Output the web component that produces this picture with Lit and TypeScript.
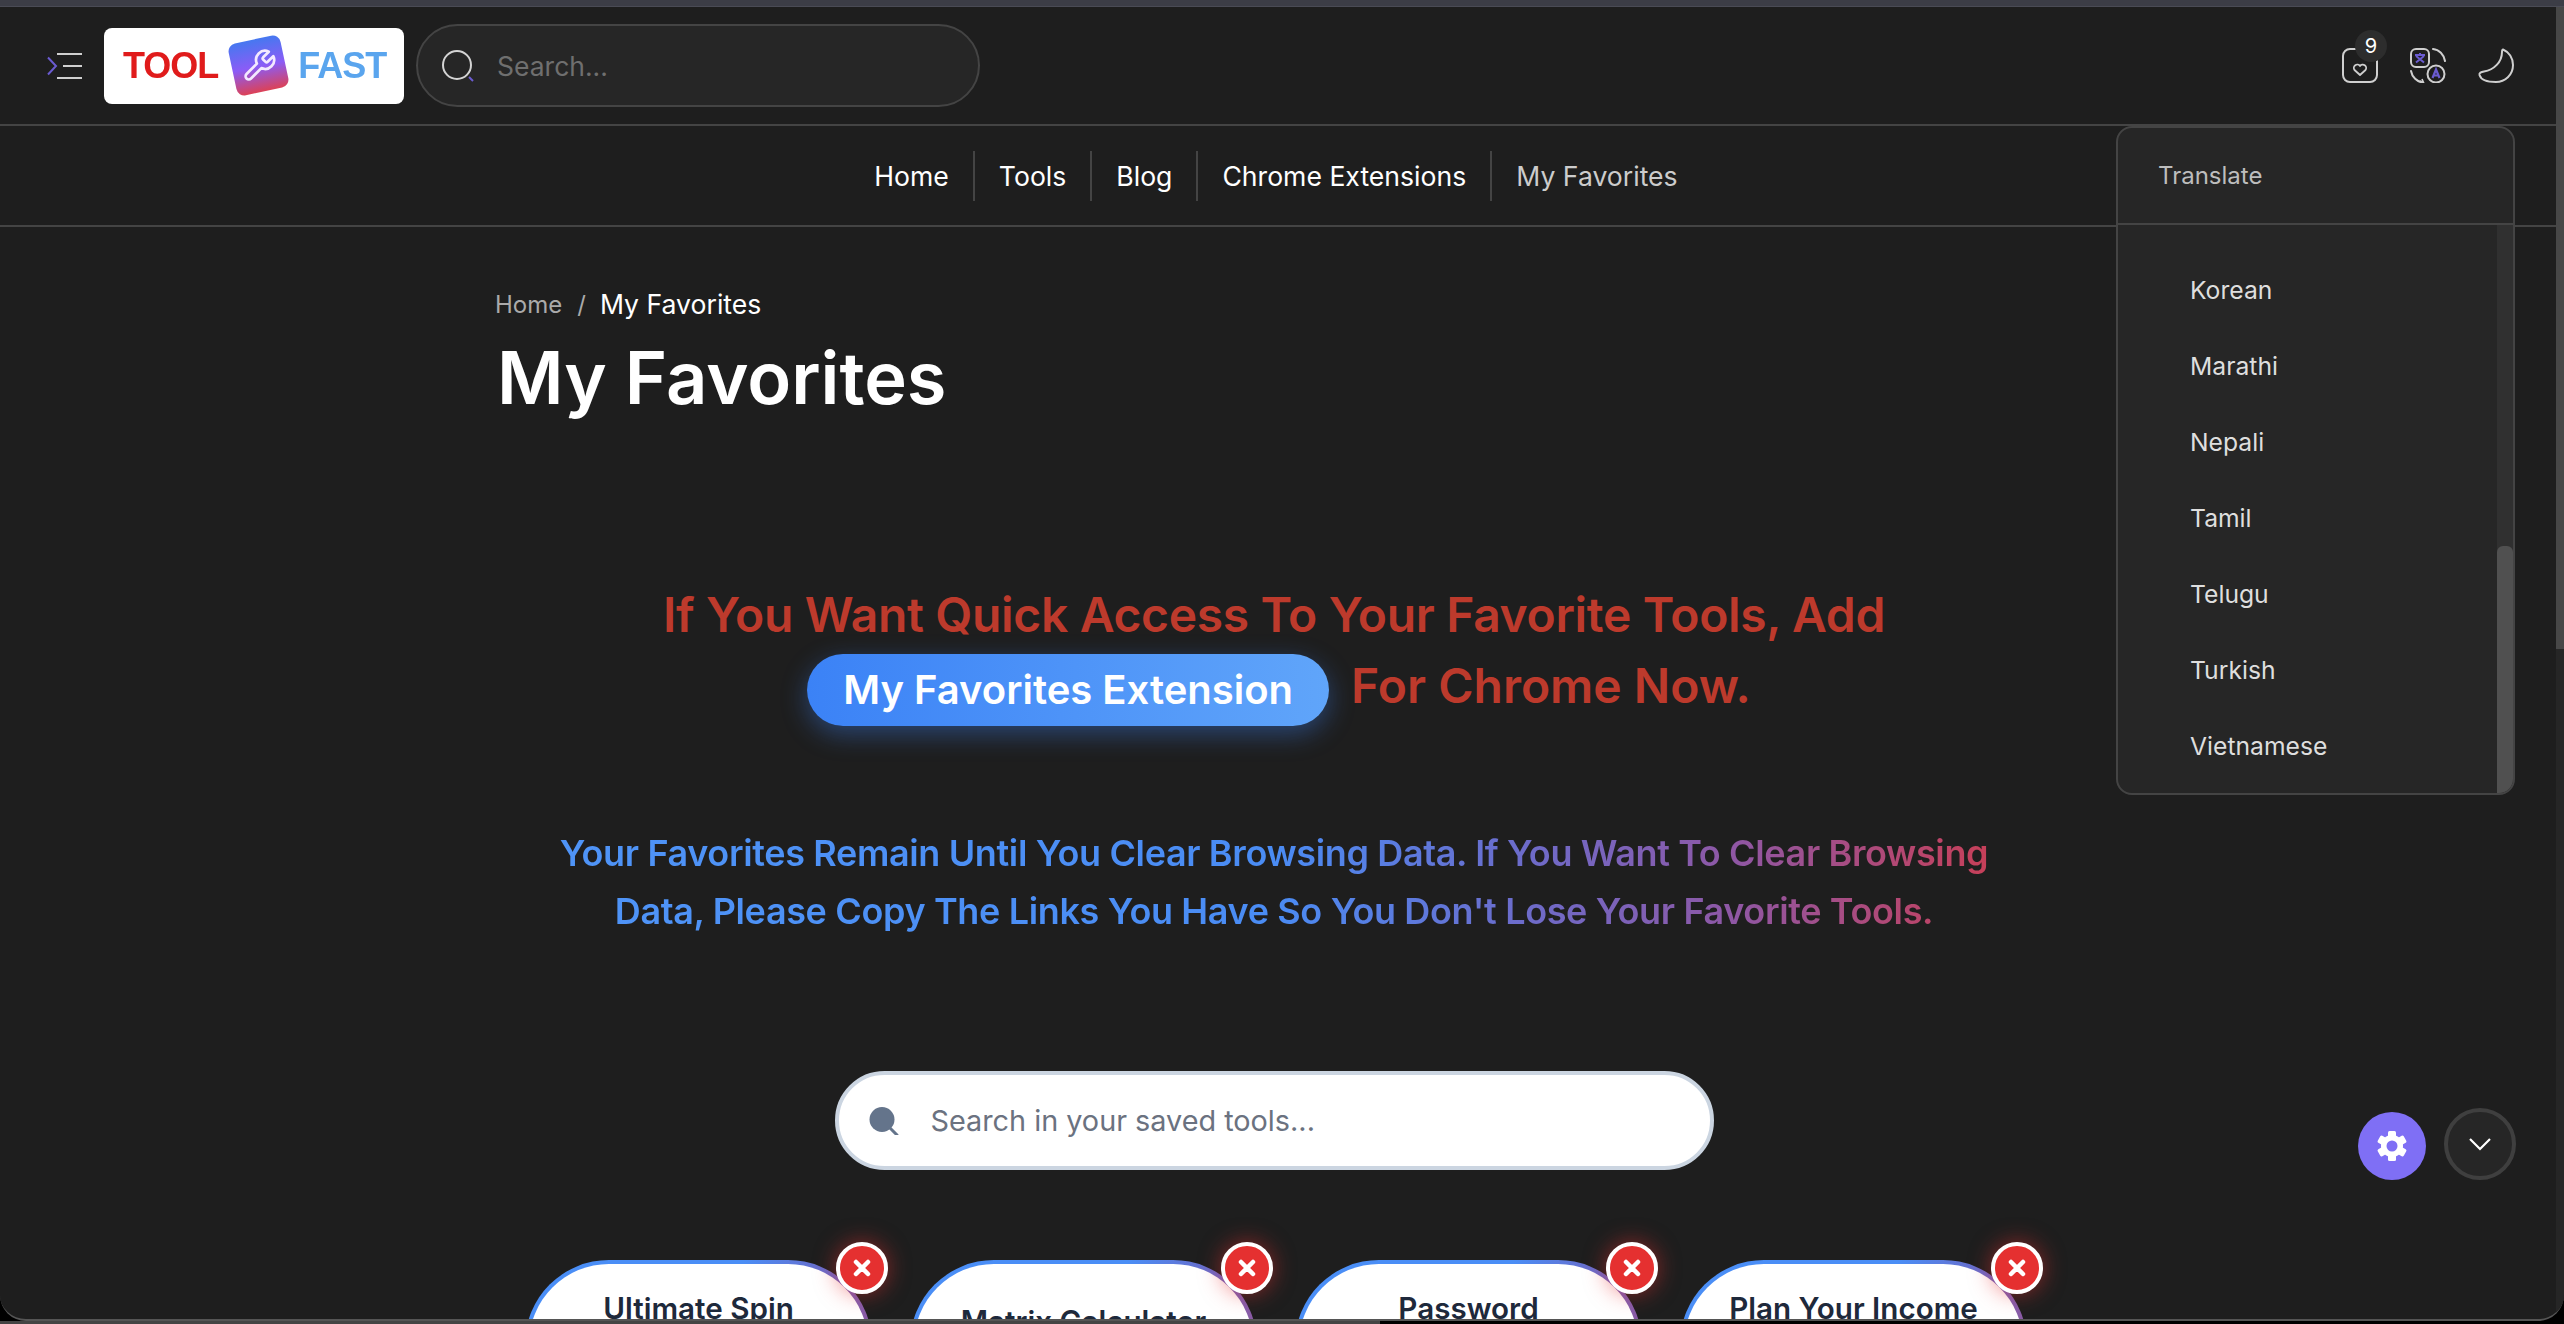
import { LitElement, html, css, svg } from "lit";
import { customElement } from "lit/decorators.js";

const LANGS = ["Korean", "Marathi", "Nepali", "Tamil", "Telugu", "Turkish", "Vietnamese"];
const CARDS = [
  { t: "Ultimate Spin", low: false },
  { t: "Matrix Calculator", low: true },
  { t: "Password", low: false },
  { t: "Plan Your Income", low: false },
];
const NAV = ["Home", "Tools", "Blog", "Chrome Extensions", "My Favorites"];

const gearTeeth = [0, 60, 120, 180, 240, 300].map(
  (a) => svg`<rect x="11" y="0" width="8" height="7" rx="1.5" fill="#fff" transform="rotate(${a} 15 15)"/>`
);

@customElement("app-root")
export class AppRoot extends LitElement {
  static styles = css`
    :host { display: block; width: 100%; height: 100vh; background: #000; overflow: hidden; font-family: Inter, "Noto Sans", sans-serif; }
    * { box-sizing: border-box; }
    .window { height: 1321px; background: #1e1e1e; border-bottom: 2px solid #555; border-radius: 0 0 26px 26px; overflow: hidden; display: flex; flex-direction: column; }
    .strip { height: 7px; flex: none; background: #3c3d46; border-bottom: 1px solid #4a4b55; }
    .body { flex: 1; display: flex; min-height: 0; }
    .main { flex: 1; min-width: 0; position: relative; overflow: hidden; }
    .pagebar { width: 8px; flex: none; background: #262626; }
    .pagebar i { display: block; height: 642px; background: #474747; }

    header { height: 119px; border-bottom: 2px solid #444; display: flex; align-items: center; padding: 0 42px 0 46px; }
    .ham { width: 36px; height: 26px; flex: none; margin-right: 22px; }
    .logo { width: 300px; height: 76px; flex: none; background: #fff; border-radius: 8px; display: flex; align-items: center; padding-left: 19px; margin-right: 12px; }
    .logo b { font: 700 36px "Liberation Sans", Arial, sans-serif; letter-spacing: -1px; line-height: 1; filter: blur(.4px); }
    .tool { color: #e01b1b; }
    .fast { color: #5aa5ee; }
    .tile { width: 53px; height: 53px; border-radius: 8px; margin: 0 13px 0 14px; transform: rotate(-12deg); background: linear-gradient(180deg, #4678f0 0%, #8b5cf6 52%, #dc4156 100%); display: flex; align-items: center; justify-content: center; flex: none; }
    .tile svg { width: 36px; height: 36px; transform: rotate(12deg); }
    .search { width: 564px; height: 83px; flex: none; background: #262626; border: 2px solid #444; border-radius: 42px; display: flex; align-items: center; padding-left: 24px; }
    .search svg { width: 32px; height: 32px; flex: none; margin-right: 23px; }
    .search span { color: #6f6f6f; font-size: 26.5px; }
    .right { margin-left: auto; display: flex; gap: 32px; align-items: center; }
    .ic { width: 36px; height: 35px; display: block; }
    .fav { position: relative; }
    .badge { position: absolute; left: 13px; top: -18px; width: 32px; height: 32px; border-radius: 50%; background: #2d2d2d; color: #fff; font-size: 20px; display: flex; align-items: center; justify-content: center; }

    nav { height: 101px; border-bottom: 2px solid #444; display: flex; align-items: center; justify-content: center; padding-right: 4px; }
    nav a { color: #fff; font-size: 26.6px; line-height: 50px; padding: 0 24px; border-left: 2px solid #444; }
    nav a:first-child { border-left: 0; }
    nav a:last-child { color: #ccc; }

    .menu { position: absolute; top: 119px; right: 41px; width: 399px; height: 669px; background: #262626; border: 2px solid #444; border-radius: 16px; overflow: hidden; display: flex; flex-direction: column; }
    .menu h4 { margin: 0; height: 97px; flex: none; border-bottom: 2px solid #444; color: #bdbdbd; font-weight: 400; font-size: 24px; display: flex; align-items: center; padding-left: 40px; }
    .menubody { flex: 1; display: flex; min-height: 0; }
    .langs { flex: 1; padding: 27px 0 0 72px; }
    .langs div { height: 76px; line-height: 76px; color: #dedede; font-size: 24.7px; }
    .mbar { width: 16px; background: #303030; display: flex; flex-direction: column; justify-content: flex-end; }
    .mbar i { display: block; height: 247px; background: #505050; border-radius: 6px 6px 0 0; }

    .content { margin-left: 495px; width: 1558px; padding-top: 57px; }
    .crumb { display: flex; align-items: center; height: 40px; font-size: 26.6px; color: #fff; }
    .crumb span { color: #aaa; font-size: 24px; }
    .crumb em { font-style: normal; color: #aaa; font-size: 24px; margin: 0 14px 0 15px; }
    h1 { margin: 9px 0 0 2px; font-size: 72.2px; line-height: 90px; font-weight: 600; color: #fff; }
    .promo { margin-top: 156px; text-align: center; color: #bd3a2c; font-size: 48px; font-weight: 600; line-height: 72px; }
    .promo1 { letter-spacing: -.35px; height: 75px; }
    .promo2 { display: flex; justify-content: center; align-items: center; gap: 22px; height: 72px; padding-left: 10px; }
    .promo2 span { margin-bottom: 8px; }
    .cta { height: 72px; padding: 0 36px; border-radius: 36px; display: flex; align-items: center; color: #fff; font-size: 40px; font-weight: 600; background: linear-gradient(90deg, #3b82f6, #60a5fa); box-shadow: 0 8px 26px rgba(59, 130, 246, .4); }
    .note { margin: 98px auto 0; width: 1440px; text-align: center; font-size: 36px; letter-spacing: -.36px; line-height: 58px; font-weight: 600; white-space: nowrap; color: transparent; background: linear-gradient(90deg, #4f94f7 0%, #4a8cf4 50%, #6c6ccb 67%, #8f57a4 82%, #c83f57 100%); -webkit-background-clip: text; background-clip: text; }
    .find { margin: 131px auto 0; width: 879px; height: 99px; background: #fff; border: 4px solid #cbd5e1; border-radius: 50px; display: flex; align-items: center; padding-left: 30px; }
    .find svg { width: 30px; height: 28px; flex: none; margin-right: 32px; }
    .find span { font-size: 28.8px; color: #6b7280; }
    .cards { margin-top: 90px; margin-left: 30px; display: flex; gap: 38px; }
    .card { position: relative; width: 347px; height: 220px; padding: 4px; border-radius: 84px; background: linear-gradient(112deg, #4a8ef6 0%, #4a8ef6 50%, #6d68c6 72%, #b34a78 100%); }
    .card div { height: 100%; background: #fff; border-radius: 80px; text-align: center; padding-top: 26px; color: #1e293b; font-size: 29.6px; font-weight: 600; line-height: 36px; }
    .card.low div { padding-top: 39px; }
    .x { position: absolute; top: -18px; right: -16px; width: 52px; height: 52px; border-radius: 50%; background: #e53030; border: 4px solid #fff; box-shadow: 0 0 22px rgba(229, 48, 48, .55); display: flex; align-items: center; justify-content: center; }
    .x svg { width: 20px; height: 20px; }

    .float { position: absolute; top: 1101px; right: 40px; display: flex; gap: 18px; align-items: flex-end; }
    .gear { width: 68px; height: 68px; border-radius: 50%; background: #7f6ff5; display: flex; align-items: center; justify-content: center; }
    .gear svg { width: 30px; height: 30px; }
    .down { width: 72px; height: 72px; border-radius: 50%; background: #262626; border: 4px solid #3f3f3f; display: flex; align-items: center; justify-content: center; }
    .down svg { width: 22px; height: 13px; }
    .under { height: 3px; width: 1380px; background: #444; }
  `;

  render() {
    return html`
      <div class="window">
        <div class="strip"></div>
        <div class="body">
          <div class="main">
            <header>
              <svg class="ham" viewBox="0 0 36 26" fill="none" stroke-width="2">
                <path d="M2 4.500 10 13 2 21.500" stroke="#6a5bd0"/>
                <path d="M11 1h25M17 13h19M11 25h25" stroke="#cfcfcf"/>
              </svg>
              <div class="logo">
                <b class="tool">TOOL</b>
                <div class="tile">
                  <svg viewBox="0 0 24 24" fill="none" stroke="#f3e9ff" stroke-width="1.800" stroke-linejoin="round">
                    <path d="M14.700 6.300a1 1 0 0 0 0 1.400l1.600 1.600a1 1 0 0 0 1.400 0l3.770-3.770a6 6 0 0 1-7.940 7.940l-6.910 6.910a2.120 2.120 0 0 1-3-3l6.910-6.910a6 6 0 0 1 7.940-7.940l-3.760 3.760z"/>
                  </svg>
                </div>
                <b class="fast">FAST</b>
              </div>
              <div class="search">
                <svg viewBox="0 0 32 32" fill="none" stroke-width="2">
                  <circle cx="15" cy="15" r="14" stroke="#d4d4d4"/>
                  <path d="M27 27l4 4" stroke="#6a5bd0"/>
                </svg>
                <span>Search...</span>
              </div>
              <div class="right">
                <div class="fav">
                  <svg class="ic" viewBox="0 0 36 35" fill="none" stroke="#cfcfcf" stroke-width="2">
                    <rect x="1" y="1" width="34" height="33" rx="7"/>
                    <path d="M18 27l-5.500-5a3.400 3.400 0 0 1 5.500-4 3.400 3.400 0 0 1 5.500 4z" stroke-width="1.800" stroke-linejoin="round"/>
                  </svg>
                  <div class="badge">9</div>
                </div>
                <svg class="ic" viewBox="0 0 36 35" fill="none" stroke="#cfcfcf" stroke-width="2">
                  <rect x="1" y="1" width="18" height="18" rx="5"/>
                  <path d="M5 7h10M10 5v3M6 14.500l8-6.500M14 14.500 6 8" stroke="#6a5bd0" stroke-width="2"/>
                  <circle cx="26" cy="26" r="8.500"/>
                  <path d="M22.500 30 26 21.500l3.500 8.500M23.500 27.500h5" stroke="#6a5bd0" stroke-width="2.200"/>
                  <path d="M23 1c6 .5 11 5.500 12 12M1 23c1 6 6 11 12 11.500" stroke-linecap="round"/>
                  <path d="M10 33l3.500 1.500-1.500 -3.500" stroke-width="1.600"/>
                </svg>
                <svg class="ic" viewBox="0 0 36 35" fill="none" stroke="#cfcfcf" stroke-width="2" stroke-linejoin="round">
                  <path d="M25 1.500C31 4 35 10 35 17 35 27 27 34 18 34 10 34 3 32 1.500 27 1 25 3 24 6 23.500 16 22 24 14 24 4 24 2.500 24.500 1.500 25 1.500Z"/>
                </svg>
              </div>
            </header>
            <nav>${NAV.map((n) => html`<a>${n}</a>`)}</nav>

            <div class="content">
              <div class="crumb"><span>Home</span><em>/</em>My Favorites</div>
              <h1>My Favorites</h1>
              <div class="promo">
                <div class="promo1">If You Want Quick Access To Your Favorite Tools, Add</div>
                <div class="promo2"><div class="cta">My Favorites Extension</div><span>For Chrome Now.</span></div>
              </div>
              <div class="note">
                <div>Your Favorites Remain Until You Clear Browsing Data. If You Want To Clear Browsing</div>
                <div>Data, Please Copy The Links You Have So You Don't Lose Your Favorite Tools.</div>
              </div>
              <div class="find">
                <svg viewBox="0 0 30 28" fill="#64748b">
                  <ellipse cx="13" cy="12.500" rx="12.500" ry="12.500"/>
                  <path d="M21 21l7 7" stroke="#64748b" stroke-width="3" stroke-linecap="round"/>
                </svg>
                <span>Search in your saved tools...</span>
              </div>
              <div class="cards">
                ${CARDS.map((c) => html`
                  <div class="card ${c.low ? "low" : ""}">
                    <div>${c.t}</div>
                    <span class="x"><svg viewBox="0 0 20 20" stroke="#fff" stroke-width="4.500" stroke-linecap="round"><path d="M4 4l12 12M16 4 4 16"/></svg></span>
                  </div>`)}
              </div>
            </div>

            <div class="menu">
              <h4>Translate</h4>
              <div class="menubody">
                <div class="langs">${LANGS.map((l) => html`<div>${l}</div>`)}</div>
                <div class="mbar"><i></i></div>
              </div>
            </div>

            <div class="float">
              <div class="gear">
                <svg viewBox="0 0 30 30">
                  ${gearTeeth}
                  <circle cx="15" cy="15" r="11" fill="#fff"/>
                  <circle cx="15" cy="15" r="5.500" fill="#7f6ff5"/>
                </svg>
              </div>
              <div class="down">
                <svg viewBox="0 0 22 13" fill="none" stroke="#fff" stroke-width="2.200"><path d="M1 1l10 10L21 1"/></svg>
              </div>
            </div>
          </div>
          <div class="pagebar"><i></i></div>
        </div>
      </div>
      <div class="under"></div>
    `;
  }
}
